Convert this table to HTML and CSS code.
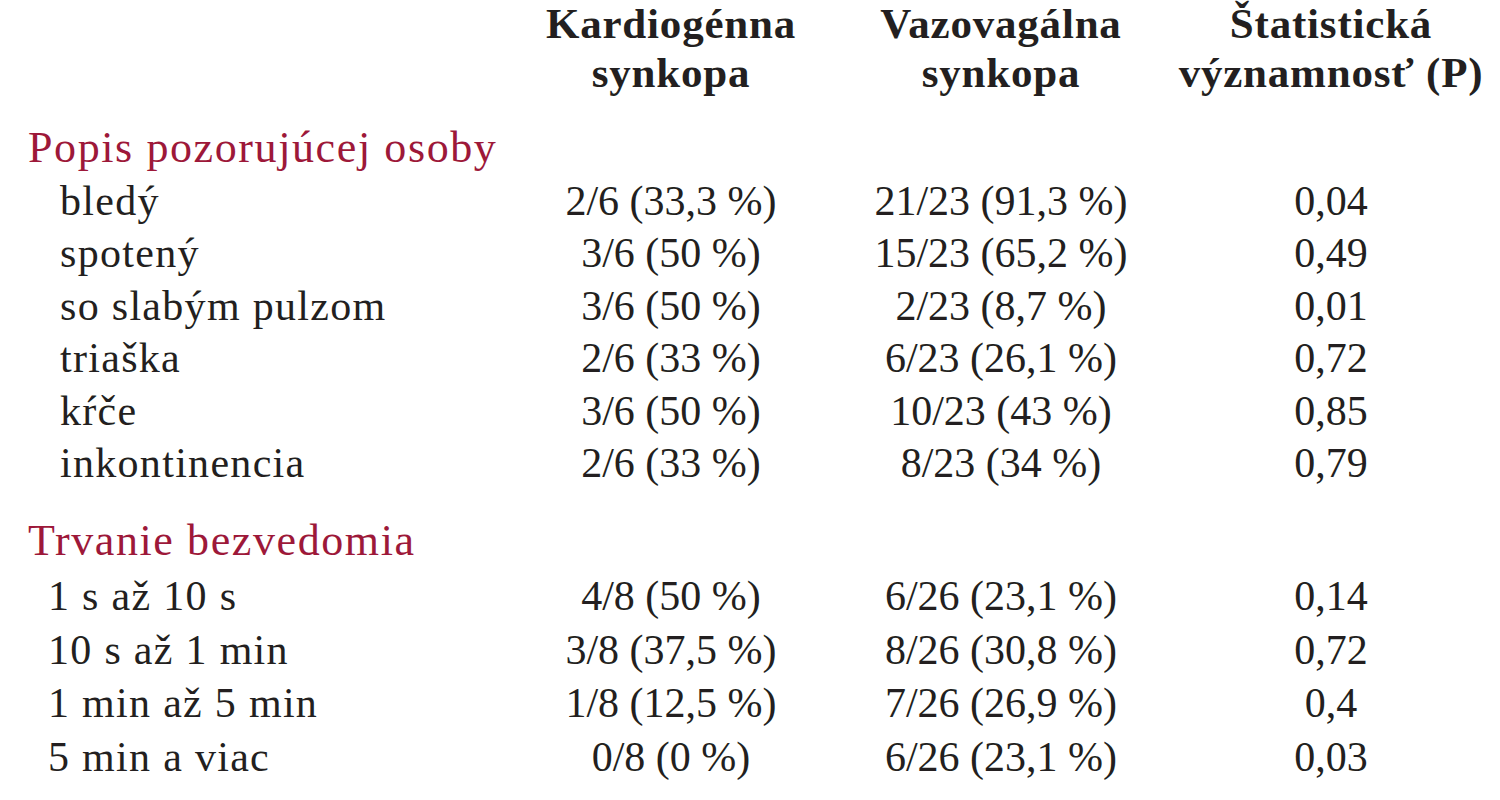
FILE: index.html
```html
<!DOCTYPE html>
<html lang="sk">
<head>
<meta charset="utf-8">
<title>Synkopa</title>
<link rel="stylesheet" href="styles.css">
</head>
<body>
<div class="table">
  <div class="row head">
    <div class="label"></div>
    <div class="cell">Kardiogénna<br>synkopa</div>
    <div class="cell">Vazovagálna<br>synkopa</div>
    <div class="cell">Štatistická<br>významnosť (P)</div>
  </div>

  <div class="group group-a">
    <div class="group-title">Popis pozorujúcej osoby</div>
    <div class="row"><div class="label">bledý</div><div class="cell">2/6 (33,3 %)</div><div class="cell">21/23 (91,3 %)</div><div class="cell">0,04</div></div>
    <div class="row"><div class="label">spotený</div><div class="cell">3/6 (50 %)</div><div class="cell">15/23 (65,2 %)</div><div class="cell">0,49</div></div>
    <div class="row"><div class="label">so slabým pulzom</div><div class="cell">3/6 (50 %)</div><div class="cell">2/23 (8,7 %)</div><div class="cell">0,01</div></div>
    <div class="row"><div class="label">triaška</div><div class="cell">2/6 (33 %)</div><div class="cell">6/23 (26,1 %)</div><div class="cell">0,72</div></div>
    <div class="row"><div class="label">kŕče</div><div class="cell">3/6 (50 %)</div><div class="cell">10/23 (43 %)</div><div class="cell">0,85</div></div>
    <div class="row"><div class="label">inkontinencia</div><div class="cell">2/6 (33 %)</div><div class="cell">8/23 (34 %)</div><div class="cell">0,79</div></div>
  </div>

  <div class="group group-b">
    <div class="group-title">Trvanie bezvedomia</div>
    <div class="row"><div class="label">1 s až 10 s</div><div class="cell">4/8 (50 %)</div><div class="cell">6/26 (23,1 %)</div><div class="cell">0,14</div></div>
    <div class="row"><div class="label">10 s až 1 min</div><div class="cell">3/8 (37,5 %)</div><div class="cell">8/26 (30,8 %)</div><div class="cell">0,72</div></div>
    <div class="row"><div class="label">1 min až 5 min</div><div class="cell">1/8 (12,5 %)</div><div class="cell">7/26 (26,9 %)</div><div class="cell">0,4</div></div>
    <div class="row"><div class="label">5 min a viac</div><div class="cell">0/8 (0 %)</div><div class="cell">6/26 (23,1 %)</div><div class="cell">0,03</div></div>
  </div>
</div>
</body>
</html>
```

FILE: styles.css
```css
html, body {
  margin: 0;
  padding: 0;
  background: #ffffff;
}

body {
  font-family: "Liberation Serif", "Times New Roman", serif;
  font-size: 42px;
  line-height: 52.5px;
  color: #231f20;
}

.table {
  padding-left: 28px;
}

.row {
  display: grid;
  grid-template-columns: 478px 330px 330px 330px;
}

.cell {
  text-align: center;
  white-space: nowrap;
}

.label {
  white-space: nowrap;
  letter-spacing: 1.3px;
}

.head {
  margin-top: -1px;
  font-weight: bold;
  font-size: 43px;
  line-height: 49px;
}

.head .cell {
  letter-spacing: 0.8px;
}

.group-title {
  color: #9d1839;
  font-size: 44px;
  letter-spacing: 1.6px;
  white-space: nowrap;
}

.group-a {
  margin-top: 25px;
}

.group-b {
  margin-top: 25px;
}

.group-b .group-title {
  margin-bottom: 3px;
}

.group-a .label {
  padding-left: 32px;
}

.group-b .label {
  padding-left: 20px;
}

.group-b .row {
  line-height: 53.5px;
}
```
